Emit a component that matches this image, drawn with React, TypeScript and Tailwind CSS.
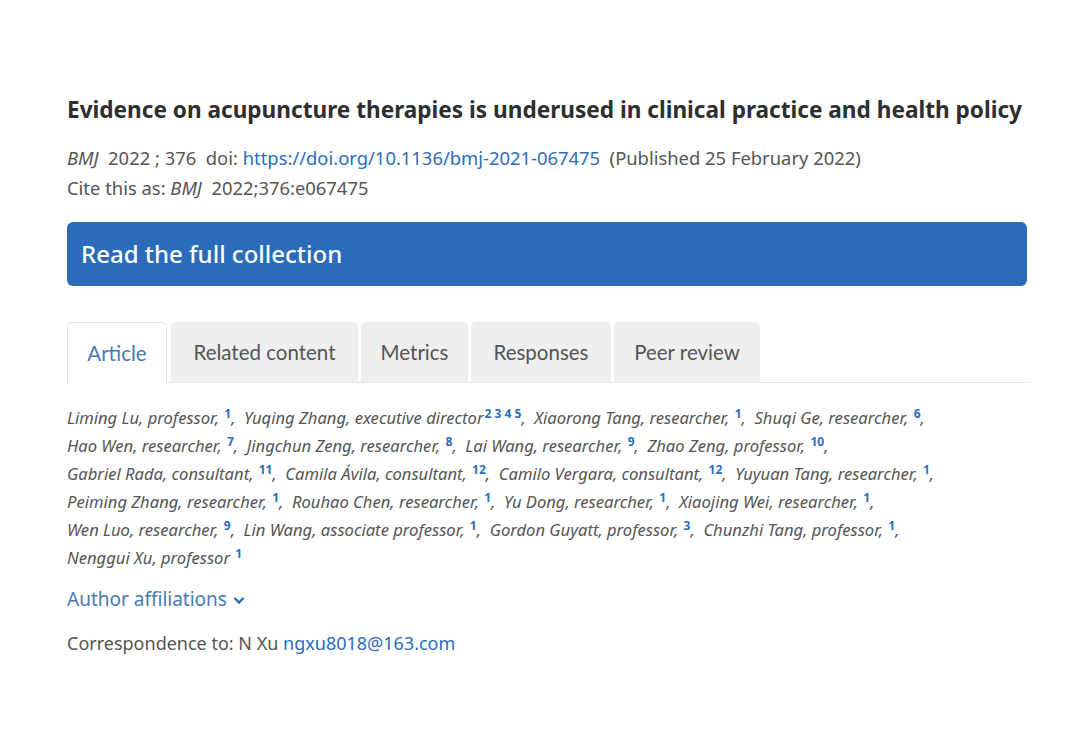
import React from "react";

type A = { n: string; s: string; last?: boolean };
const lines: A[][] = [
  [
    { n: "Liming Lu, professor, ", s: "1" },
    { n: "Yuqing Zhang, executive director", s: "2 3 4 5" },
    { n: "Xiaorong Tang, researcher, ", s: "1" },
    { n: "Shuqi Ge, researcher, ", s: "6" },
  ],
  [
    { n: "Hao Wen, researcher, ", s: "7" },
    { n: "Jingchun Zeng, researcher, ", s: "8" },
    { n: "Lai Wang, researcher, ", s: "9" },
    { n: "Zhao Zeng, professor, ", s: "10" },
  ],
  [
    { n: "Gabriel Rada, consultant, ", s: "11" },
    { n: "Camila Ávila, consultant, ", s: "12" },
    { n: "Camilo Vergara, consultant, ", s: "12" },
    { n: "Yuyuan Tang, researcher, ", s: "1" },
  ],
  [
    { n: "Peiming Zhang, researcher, ", s: "1" },
    { n: "Rouhao Chen, researcher, ", s: "1" },
    { n: "Yu Dong, researcher, ", s: "1" },
    { n: "Xiaojing Wei, researcher, ", s: "1" },
  ],
  [
    { n: "Wen Luo, researcher, ", s: "9" },
    { n: "Lin Wang, associate professor, ", s: "1" },
    { n: "Gordon Guyatt, professor, ", s: "3" },
    { n: "Chunzhi Tang, professor, ", s: "1" },
  ],
  [{ n: "Nenggui Xu, professor ", s: "1", last: true }],
];

const tabs: { t: string; w: string }[] = [
  { t: "Related content", w: "w-[187px]" },
  { t: "Metrics", w: "w-[107px]" },
  { t: "Responses", w: "w-[140px]" },
  { t: "Peer review", w: "w-[146px]" },
];

const sans = { fontFamily: '"Noto Sans", sans-serif' };

export default function App() {
  return (
    <div className="w-[1080px] h-[755px] bg-white overflow-hidden">
      <div className="pl-[67px] w-[1027px] pt-[96px]">
        <h1
          className="text-[22.6px] leading-[28px] font-bold text-[#2e2e2e] whitespace-nowrap"
          style={sans}
        >
          Evidence on acupuncture therapies is underused in clinical practice and health policy
        </h1>
        <div className="mt-[19px] text-[18.4px] leading-[30px] text-[#555] whitespace-pre" style={sans}>
          <div>
            <i>BMJ</i>
            {"  2022 ; 376  doi: "}
            <span className="text-[#2a6ebb]">https://doi.org/10.1136/bmj-2021-067475</span>
            {"  (Published 25 February 2022)"}
          </div>
          <div>
            {"Cite this as: "}
            <i>BMJ</i>
            {"  2022;376:e067475"}
          </div>
        </div>
        <div className="mt-[19px] h-[64px] rounded-[6px] bg-[#2a6cba] flex items-center pl-[14px]">
          <span className="text-white text-[24px] font-medium" style={sans}>
            Read the full collection
          </span>
        </div>
        <div
          className="mt-[36px] flex items-end gap-[3px] border-b border-[#e4e4e4] h-[61px]"
          style={{ fontFamily: "Lato, sans-serif" }}
        >
          <div className="h-[61px] -mb-px w-[100px] mr-[1px] flex items-center justify-center bg-white border border-b-0 border-[#e2e2e2] rounded-t-[5px] text-[20.5px] text-[#4a78b3]">
            Article
          </div>
          {tabs.map((t) => (
            <div
              key={t.t}
              className={`h-[60px] ${t.w} flex items-center justify-center bg-[#efefef] rounded-t-[5px] text-[20.5px] text-[#555]`}
            >
              {t.t}
            </div>
          ))}
        </div>
        <div className="mt-[21px] text-[16.6px] leading-[28px] text-[#555] italic whitespace-nowrap" style={sans}>
          {lines.map((ln, i) => (
            <div key={i}>
              {ln.map((a, j) => (
                <React.Fragment key={j}>
                  {a.n}
                  <sup className="not-italic font-bold text-[#2a6ebb] text-[12px] ml-[1px]">{a.s}</sup>
                  {!a.last && <>,&nbsp; </>}
                </React.Fragment>
              ))}
            </div>
          ))}
        </div>
        <div className="mt-[13px] flex items-center gap-[6px] text-[19px] text-[#4a78b3]" style={sans}>
          Author affiliations
          <svg width="12" height="9" viewBox="0 0 12 9" className="mt-[2px]">
            <path d="M1.5 2 L6 6.5 L10.5 2" stroke="#2a6ebb" strokeWidth="2.4" fill="none" />
          </svg>
        </div>
        <div className="mt-[16px] text-[18px] text-[#555]" style={sans}>
          Correspondence to: N Xu <span className="text-[#2a6ebb]">ngxu8018@163.com</span>
        </div>
      </div>
    </div>
  );
}
